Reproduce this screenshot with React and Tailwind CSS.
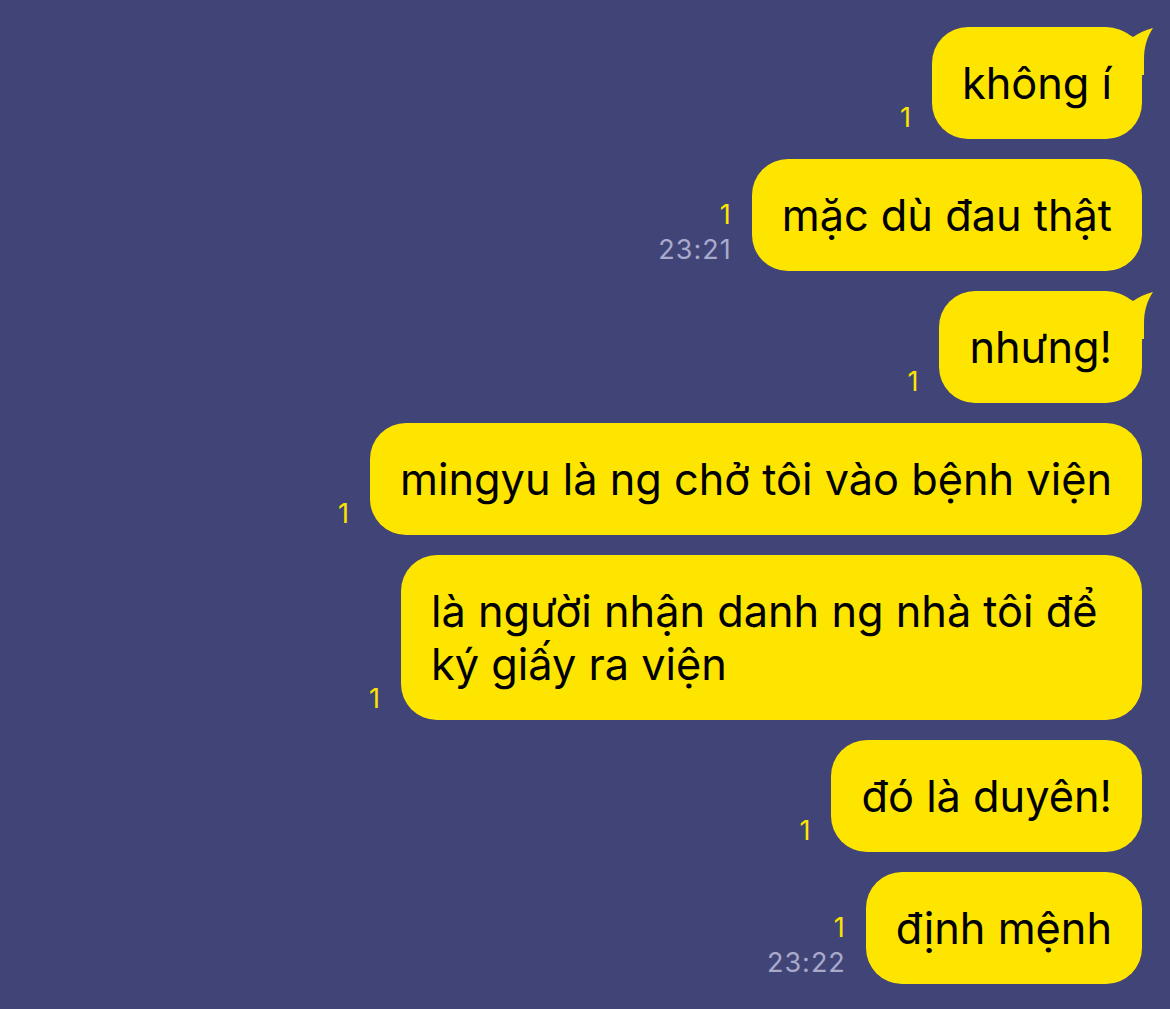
import React from 'react';

const messages = [
  { text: 'không í', tail: true },
  { text: 'mặc dù đau thật', time: '23:21' },
  { text: 'nhưng!', tail: true },
  { text: 'mingyu là ng chở tôi vào bệnh viện' },
  { text: 'là người nhận danh ng nhà tôi để\nký giấy ra viện', wide: true },
  { text: 'đó là duyên!' },
  { text: 'định mệnh', time: '23:22' },
];

const Tail = () => (
  <svg className="absolute -top-[2px] -right-[11px]" width="40" height="50" viewBox="0 0 40 50">
    <path d="M0 4 C10 4 16 10 20 12 C26 8 32 5 40 3 C34 12 31 22 31 34 L31 50 L0 50 Z" fill="#FEE500" />
  </svg>
);

const Bubble = ({ msg }) => (
  <div className="flex items-end gap-[20px]">
    <div className="flex flex-col items-end pb-[5px] leading-[32px] tracking-[1px]">
      <span className="text-[27px] text-[#FEE500]">1</span>
      {msg.time && <span className="text-[27px] text-[#A9AACB] mt-[3px]">{msg.time}</span>}
    </div>
    <div className="relative">
      {msg.tail && <Tail />}
      <div
        className={`relative rounded-[36px] bg-[#FEE500] px-[30px] py-[29.5px] text-[43.3px] leading-[53px] text-black whitespace-pre-line ${msg.wide ? 'w-[741px]' : ''}`}
      >
        {msg.text}
      </div>
    </div>
  </div>
);

const App = () => {
  return (
    <div
      className="min-h-[1009px] w-[1170px] bg-[#414477] pt-[27px] pr-[28px] flex flex-col items-end gap-[20px] overflow-hidden"
      style={{ fontFamily: 'Inter, "Noto Sans", sans-serif' }}
    >
      {messages.map((m, i) => (
        <Bubble key={i} msg={m} />
      ))}
    </div>
  );
};

export default App;
